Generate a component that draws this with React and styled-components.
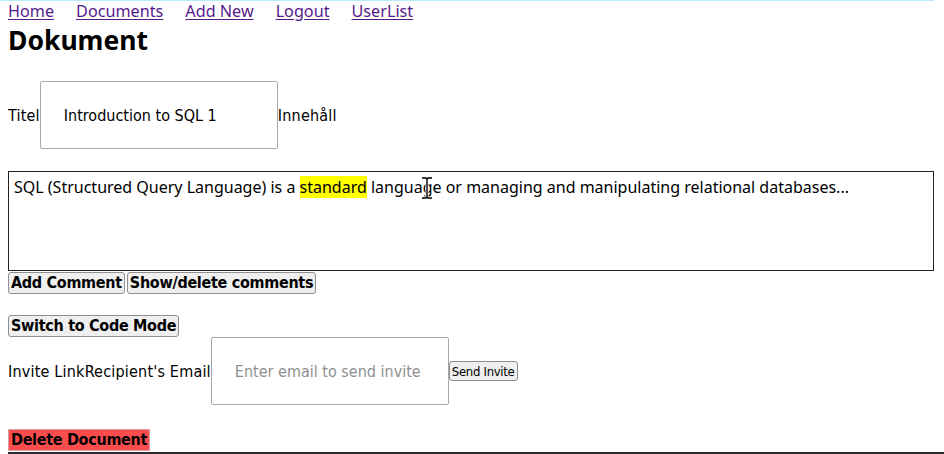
import React from 'react';
import styled, { createGlobalStyle } from 'styled-components';

const GlobalStyle = createGlobalStyle`
  html {
    background: linear-gradient(#b5ebfb, #b5ebfb) no-repeat 0 0 / 934px 1px;
  }
  body {
    margin: 0 0 0 8px;
    background: transparent;
    font-family: "DejaVu Sans Condensed", "Liberation Sans", sans-serif;
    font-size: 16px;
    color: #000;
    overflow: hidden;
  }
`;

const Nav = styled.nav`
  display: flex;
  gap: 22px;
  height: 22px;
  align-items: center;
  font-family: "Noto Sans", "Open Sans", sans-serif;
  font-size: 16.2px;

  a {
    color: #551a8b;
    text-decoration: underline;
    text-underline-offset: 2px;
  }
`;

const Heading = styled.h1`
  margin: 0;
  height: 36px;
  line-height: 36px;
  font-family: "Noto Sans", "Open Sans", sans-serif;
  font-size: 26.5px;
  font-weight: 700;
`;

const Row = styled.div`
  display: flex;
  align-items: center;
  margin-top: ${p => p.$top || 0}px;
`;

const Label = styled.span`
  font-size: 16px;
  letter-spacing: 0.2px;
  white-space: nowrap;
`;

const TextInput = styled.input`
  box-sizing: border-box;
  width: 238px;
  height: 68px;
  padding: 0 23px;
  border: 1px solid #a9a9a9;
  border-radius: 2px;
  font-family: inherit;
  font-size: 16px;
  color: #000;
  outline: none;

  &::placeholder {
    color: #8f8f8f;
  }
`;

const Editor = styled.div`
  position: relative;
  box-sizing: border-box;
  width: 926px;
  height: 100px;
  margin-top: 22px;
  padding: 3px 5px;
  border: 1px solid #222;
  font-family: "Noto Sans", "Open Sans", sans-serif;
  font-size: 16px;
  line-height: 24px;
`;

const Mark = styled.span`
  background: #ffff00;
`;

const Cursor = styled.svg`
  position: absolute;
  left: 412px;
  top: 5px;
`;

const Buttons = styled.div`
  display: flex;
  gap: 2px;
  margin-top: ${p => p.$top || 1}px;
`;

const Button = styled.button`
  font-family: "DejaVu Sans Condensed", "Liberation Sans", sans-serif;
  font-size: ${p => (p.$small ? '13px' : '16px')};
  font-weight: ${p => (p.$small ? 400 : 700)};
  letter-spacing: -0.3px;
  padding: 1px 2px;
  height: ${p => (p.$small ? '20px' : '22px')};
  line-height: 1;
  color: #000;
  background: ${p => (p.$danger ? '#ff4d4d' : '#efefef')};
  border: 1px solid ${p => (p.$danger ? '#d6a0a0' : '#8f8f8f')};
  border-radius: ${p => (p.$danger ? '0' : '3px')};
  white-space: nowrap;
`;

const Footer = styled.div`
  height: 4px;
  margin-top: 1px;
  margin-right: -8px;
  background: #2b2b2b;
`;

export default function App() {
  return (
    <>
      <GlobalStyle />
      <Nav>
        <a href="#home">Home</a>
        <a href="#documents">Documents</a>
        <a href="#add">Add New</a>
        <a href="#logout">Logout</a>
        <a href="#users">UserList</a>
      </Nav>
      <Heading>Dokument</Heading>
      <Row $top={23}>
        <Label>Titel</Label>
        <TextInput defaultValue="Introduction to SQL 1" />
        <Label>Innehåll</Label>
      </Row>
      <Editor>
        SQL (Structured Query Language) is a <Mark>standard</Mark> language or managing and manipulating relational databases...
        <Cursor width="12" height="22" viewBox="0 0 12 22">
          <path d="M1 1h4l1 1 1-1h4M6 2v18M1 21h4l1-1 1 1h4" fill="none" stroke="#fff" strokeWidth="3" />
          <path d="M1 1h4l1 1 1-1h4M6 2v18M1 21h4l1-1 1 1h4" fill="none" stroke="#000" strokeWidth="1.4" />
        </Cursor>
      </Editor>
      <Buttons>
        <Button>Add Comment</Button>
        <Button>Show/delete comments</Button>
      </Buttons>
      <Buttons $top={21}>
        <Button>Switch to Code Mode</Button>
      </Buttons>
      <Row>
        <Label>Invite LinkRecipient's Email</Label>
        <TextInput placeholder="Enter email to send invite" />
        <Button $small>Send Invite</Button>
      </Row>
      <Buttons $top={24}>
        <Button $danger>Delete Document</Button>
      </Buttons>
      <Footer />
    </>
  );
}
